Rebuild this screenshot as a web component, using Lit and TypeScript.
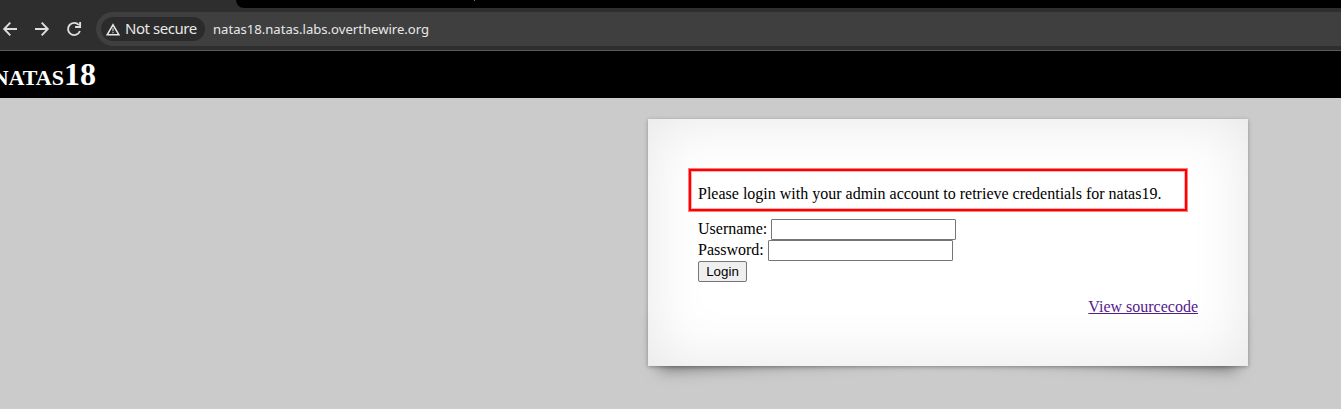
import { LitElement, html, css } from "lit";
import { customElement } from "lit/decorators.js";

@customElement("browser-bar")
class BrowserBar extends LitElement {
  static styles = css`
    :host { display: block; height: 51px; box-sizing: border-box; background: #2e2e2e; border-bottom: 1px solid #5a5a5a; color: #e8e8e8; font-family: "Noto Sans", sans-serif; }
    .tabs { height: 8px; padding-left: 236px; }
    .strip { display: flex; height: 8px; background: #000; border-bottom-left-radius: 8px; }
    .mark { width: 1px; height: 1px; margin-left: 238px; background: #777; }
    .row { display: flex; height: 42px; align-items: flex-start; }
    .icon { display: block; width: 20px; height: 20px; margin-top: 11px; flex: none; fill: none; stroke: #dedede; stroke-width: 1.9; }
    .forward { margin-left: 12px; }
    .reload { margin-left: 12px; }
    .address { display: flex; flex: 1; height: 34px; box-sizing: border-box; margin: 4px 0 0 12px; padding: 5px 0 5px 5px; border-radius: 17px 0 0 17px; background: #3f3f3f; }
    .chip { display: flex; align-items: center; width: 104px; height: 24px; box-sizing: border-box; padding-left: 5px; border-radius: 12px; background: #2b2b2b; }
    .warn { display: block; width: 15px; height: 13px; margin: 0 4px 0 0; }
    .label { font-size: 15px; line-height: 24px; letter-spacing: -.45px; white-space: nowrap; margin-top: -2px; }
    .url { margin-left: 8px; font-size: 13.1px; line-height: 24px; white-space: nowrap; }
  `;
  render() {
    return html`
      <div class="tabs"><div class="strip"><div class="mark"></div></div></div>
      <div class="row">
        <svg class="icon" viewBox="0 0 20 20"><path d="M10.3 3.7 4.2 10l6.1 6.3M4.2 10H17"/></svg>
        <svg class="icon forward" viewBox="0 0 20 20"><path d="M9.7 3.7 15.8 10l-6.1 6.3M15.8 10H3"/></svg>
        <svg class="icon reload" viewBox="0 0 20 20"><path d="M14.8 6A6.1 6.1 0 1 0 15.9 12M16.1 3v5h-5"/></svg>
        <div class="address">
          <div class="chip">
            <svg class="warn" viewBox="0 0 15 13"><path d="M7 1.8 12.8 11.7H1.2z" fill="none" stroke="#e8e8e8" stroke-width="1.6"/><path d="M6.3 5.2h1.4v3H6.3zm0 3.7h1.4v1.3H6.3z" fill="#b8b8b8"/></svg>
            <span class="label">Not secure</span>
          </div>
          <span class="url">natas18.natas.labs.overthewire.org</span>
        </div>
      </div>`;
  }
}

@customElement("login-card")
class LoginCard extends LitElement {
  static styles = css`
    :host { display: block; position: relative; z-index: 0; width: 600px; height: 247px; }
    .card { position: relative; width: 600px; height: 247px; box-sizing: border-box; padding: 50px; background: #fff; box-shadow: 0 1px 4px rgba(0,0,0,.3), 0 0 60px rgba(0,0,0,.1) inset; }
    .card::before, .card::after { content: ""; position: absolute; z-index: -2; bottom: 15px; width: 50%; height: 20%; max-width: 300px; box-shadow: 0 10px 16px rgba(0,0,0,.5); }
    .card::before { left: 10px; transform: rotate(-3deg); }
    .card::after { right: 10px; transform: rotate(3deg); }
    .notice { box-sizing: border-box; width: 498px; height: 42px; margin: 0 0 8px -9px; padding: 14px 0 0 7px; border: 2px solid #f00; box-shadow: 0 0 0 1px rgba(255,0,0,.5), inset 0 0 0 1px rgba(255,0,0,.3); line-height: 18px; white-space: nowrap; }
    .line { height: 21px; line-height: 19px; white-space: nowrap; }
    .field { box-sizing: border-box; width: 185px; height: 21px; margin: 0; padding: 1px 2px; border: 1px solid #767676; border-radius: 1px; background: #fff; font: 13.333px "Liberation Sans", sans-serif; vertical-align: baseline; }
    .button { display: block; box-sizing: border-box; width: 49px; height: 21px; margin: 0; padding: 1px 6px; border: 1px solid #767676; border-radius: 2px; background: #efefef; color: #000; font: 13.333px "Liberation Sans", sans-serif; }
    .source { margin-top: 16px; text-align: right; line-height: 18px; }
    .link { color: #551a8b; text-decoration: underline; }
  `;
  render() {
    return html`
      <div class="card">
        <div class="notice">Please login with your admin account to retrieve credentials for natas19.</div>
        <div class="line">Username: <input class="field" aria-label="Username"></div>
        <div class="line">Password: <input class="field" type="password" aria-label="Password"></div>
        <button class="button">Login</button>
        <div class="source"><a class="link" href="#">View sourcecode</a></div>
      </div>`;
  }
}

@customElement("app-root")
class AppRoot extends LitElement {
  static styles = css`
    :host { display: block; height: 409px; overflow: hidden; background: #cbcbcb; color: #000; font: 16px "Liberation Serif", serif; }
    .title { display: flex; justify-content: flex-end; box-sizing: border-box; width: 96px; height: 47px; margin: 0; font-size: 32px; line-height: 47px; font-weight: bold; font-variant: small-caps; color: #fff; white-space: nowrap; }
    .header { background: #000; }
    .main { padding: 21px 0 0 648px; }
  `;
  render() {
    return html`
      <browser-bar></browser-bar>
      <div class="header"><h1 class="title">natas18</h1></div>
      <div class="main"><login-card></login-card></div>`;
  }
}
